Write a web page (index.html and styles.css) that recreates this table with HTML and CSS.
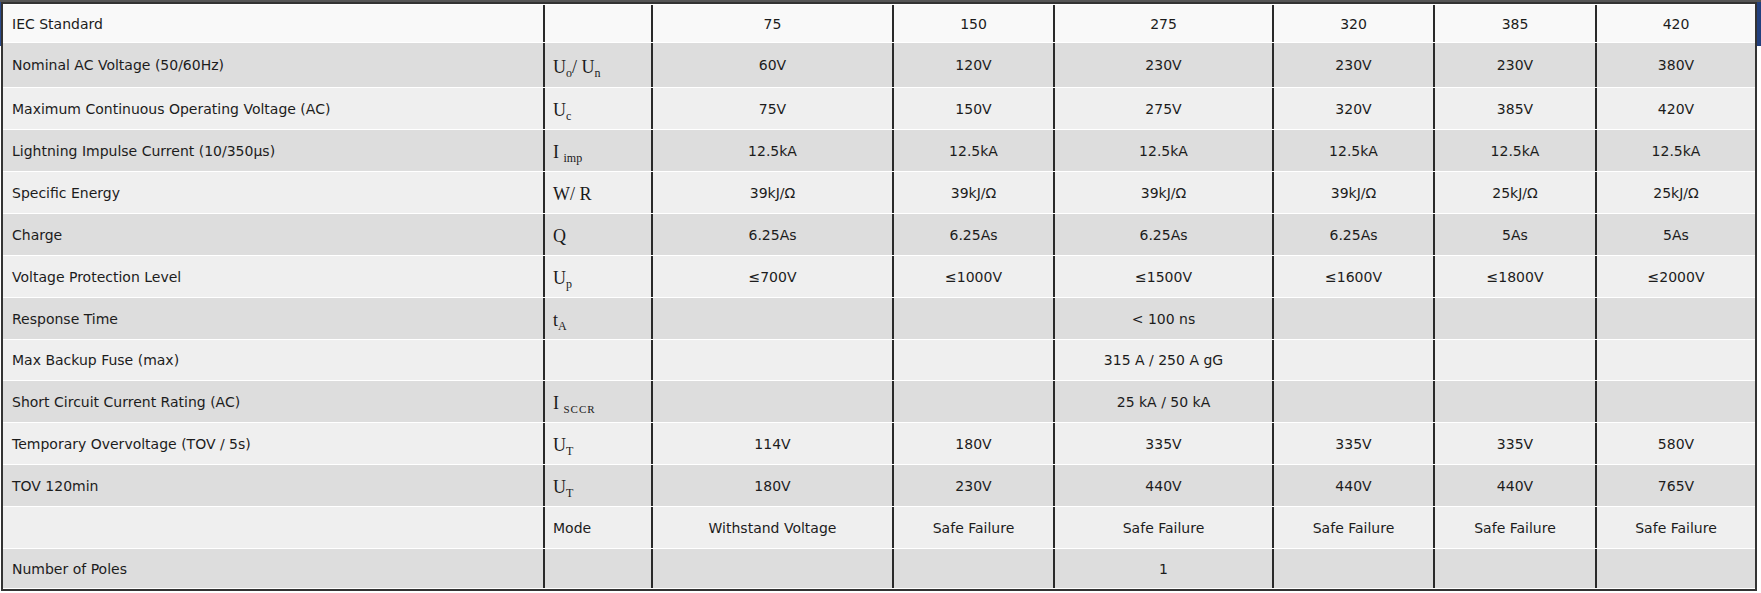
FILE: index.html
```html
<!DOCTYPE html>
<html>
<head>
<meta charset="utf-8">
<link rel="stylesheet" href="styles.css">
</head>
<body>
<div class="page">
<table class="spec">
  <tr class="hdr">
    <td class="c1 lab">IEC Standard</td>
    <td class="c2 sym"></td>
    <td class="c3">75</td>
    <td class="c4">150</td>
    <td class="c5">275</td>
    <td class="c6">320</td>
    <td class="c7">385</td>
    <td class="c8">420</td>
  </tr>
  <tr class="dark tall">
    <td class="lab">Nominal AC Voltage (50/60Hz)</td>
    <td class="sym">U<sub>o</sub>/ U<sub>n</sub></td>
    <td>60V</td><td>120V</td><td>230V</td><td>230V</td><td>230V</td><td>380V</td>
  </tr>
  <tr class="light">
    <td class="lab">Maximum Continuous Operating Voltage (AC)</td>
    <td class="sym">U<sub>c</sub></td>
    <td>75V</td><td>150V</td><td>275V</td><td>320V</td><td>385V</td><td>420V</td>
  </tr>
  <tr class="dark">
    <td class="lab">Lightning Impulse Current (10/350μs)</td>
    <td class="sym">I <sub>imp</sub></td>
    <td>12.5kA</td><td>12.5kA</td><td>12.5kA</td><td>12.5kA</td><td>12.5kA</td><td>12.5kA</td>
  </tr>
  <tr class="light">
    <td class="lab">Specific Energy</td>
    <td class="sym">W/ R</td>
    <td>39kJ/Ω</td><td>39kJ/Ω</td><td>39kJ/Ω</td><td>39kJ/Ω</td><td>25kJ/Ω</td><td>25kJ/Ω</td>
  </tr>
  <tr class="dark">
    <td class="lab">Charge</td>
    <td class="sym">Q</td>
    <td>6.25As</td><td>6.25As</td><td>6.25As</td><td>6.25As</td><td>5As</td><td>5As</td>
  </tr>
  <tr class="light">
    <td class="lab">Voltage Protection Level</td>
    <td class="sym">U<sub>p</sub></td>
    <td>≤700V</td><td>≤1000V</td><td>≤1500V</td><td>≤1600V</td><td>≤1800V</td><td>≤2000V</td>
  </tr>
  <tr class="dark">
    <td class="lab">Response Time</td>
    <td class="sym">t<sub>A</sub></td>
    <td></td><td></td><td>&lt; 100 ns</td><td></td><td></td><td></td>
  </tr>
  <tr class="light short">
    <td class="lab">Max Backup Fuse (max)</td>
    <td class="sym"></td>
    <td></td><td></td><td>315 A / 250 A gG</td><td></td><td></td><td></td>
  </tr>
  <tr class="dark">
    <td class="lab">Short Circuit Current Rating (AC)</td>
    <td class="sym">I <sub class="caps">SCCR</sub></td>
    <td></td><td></td><td>25 kA / 50 kA</td><td></td><td></td><td></td>
  </tr>
  <tr class="light">
    <td class="lab">Temporary Overvoltage (TOV / 5s)</td>
    <td class="sym">U<sub>T</sub></td>
    <td>114V</td><td>180V</td><td>335V</td><td>335V</td><td>335V</td><td>580V</td>
  </tr>
  <tr class="dark">
    <td class="lab">TOV 120min</td>
    <td class="sym">U<sub>T</sub></td>
    <td>180V</td><td>230V</td><td>440V</td><td>440V</td><td>440V</td><td>765V</td>
  </tr>
  <tr class="light">
    <td class="lab"></td>
    <td class="lab mode">Mode</td>
    <td>Withstand Voltage</td><td>Safe Failure</td><td>Safe Failure</td><td>Safe Failure</td><td>Safe Failure</td><td>Safe Failure</td>
  </tr>
  <tr class="dark last">
    <td class="lab">Number of Poles</td>
    <td class="sym"></td>
    <td></td><td></td><td>1</td><td></td><td></td><td></td>
  </tr>
</table>
</div>
</body>
</html>
```
FILE: styles.css
```css
html, body {
  margin: 0;
  padding: 0;
  background: #ffffff;
}
.page {
  padding: 2px 0 0 1px;
  background:
    linear-gradient(#555555, #555555) left top / 100% 2px no-repeat,
    linear-gradient(#2b4a8c, #2b4a8c) left top / 1px 46px no-repeat,
    linear-gradient(#22407e, #22407e) right top / 4px 46px no-repeat,
    #ffffff;
  height: 591px;
  box-sizing: border-box;
}
.spec {
  width: 1756px;
  table-layout: fixed;
  border-collapse: separate;
  border-spacing: 0 1px;
  border: 2px solid #333333;
  background: #ffffff;
  font-family: "DejaVu Sans", sans-serif;
  font-size: 14px;
  color: #1c1c1c;
}
.spec td {
  box-sizing: border-box;
  padding: 0 8px;
  height: 41px;
  text-align: center;
  vertical-align: middle;
  border-left: 2px solid #2a2a2a;
  white-space: nowrap;
  line-height: 1;
}
.spec td:first-child {
  border-left: none;
}
.spec td.lab {
  text-align: left;
  padding-left: 9px;
}
.spec td.mode {
  padding-left: 8px;
}
.spec td.sym {
  text-align: left;
  padding-left: 8px;
  padding-top: 3px;
  font-family: "Liberation Serif", "Times New Roman", serif;
  font-size: 18px;
  color: #1a1a1a;
}
.sym sub {
  font-size: 12px;
  vertical-align: -4px;
  line-height: 0;
}
.sym sub.caps {
  font-size: 11px;
  letter-spacing: 1px;
}
.c1 { width: 540px; }
.c2 { width: 108px; }
.c3 { width: 241px; }
.c4 { width: 161px; }
.c5 { width: 219px; }
.c6 { width: 161px; }
.c7 { width: 162px; }
.c8 { width: 160px; }
.hdr td {
  background: #f9f9f9;
  height: 37px;
}
.dark td {
  background: #dddddd;
}
.light td {
  background: #efefef;
}
.tall td {
  height: 44px;
}
.short td {
  height: 40px;
}
.last td {
  height: 39px;
}
```
